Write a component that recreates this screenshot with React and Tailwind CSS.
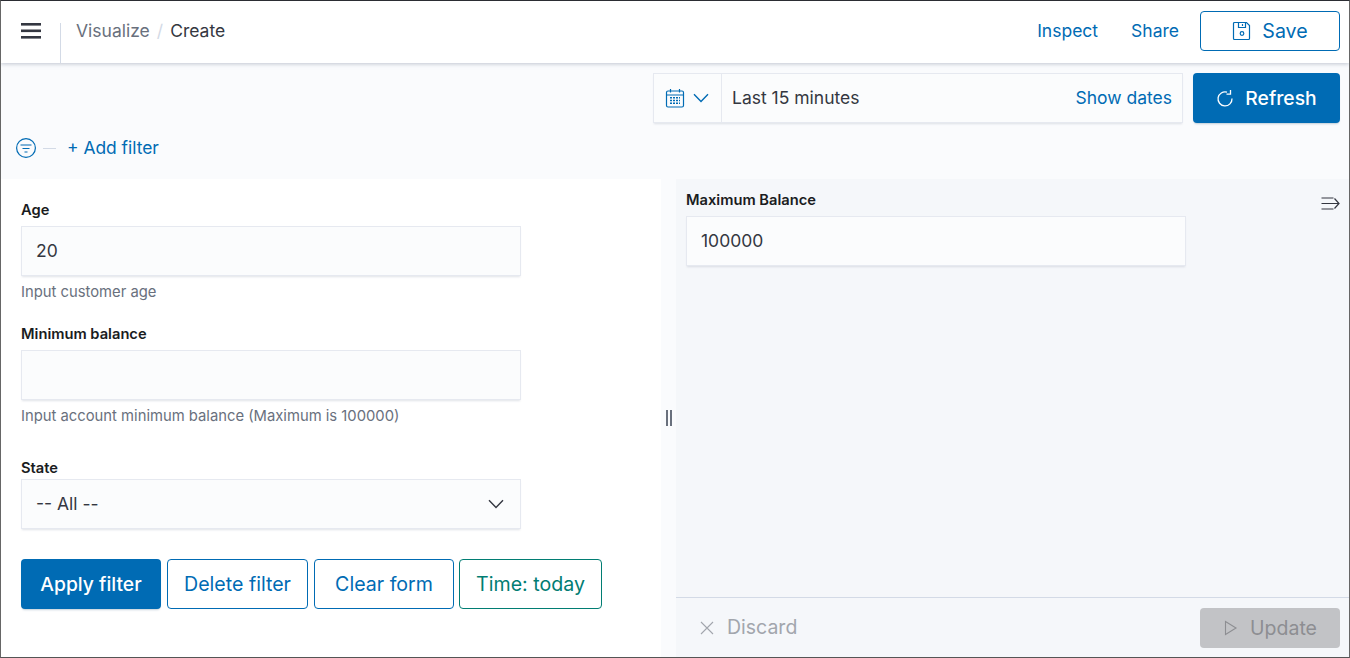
import React from "react";

const Field = ({ label, value, help, cls = "", gap = "mb-[7px]", children }) => (
  <div className={cls}>
    <div className={"text-[14.7px] leading-[18px] font-semibold text-[#1a1c21] " + gap}>{label}</div>
    <div className="w-[500px] h-[50px] bg-[#fbfcfd] border border-[#e6e9f0] shadow-[0_2px_2px_-1px_rgba(152,162,179,0.3)] flex items-center justify-between pl-[14px] pr-[16px] text-[17.5px] text-[#343741]">
      <span>{value}</span>
      {children}
    </div>
    {help && <div className="mt-[7px] text-[14.8px] leading-[18px] text-[#69707d]">{help}</div>}
  </div>
);

const Chevron = ({ cls }) => (
  <svg width="16" height="10" viewBox="0 0 16 10" fill="none" stroke="currentColor" strokeWidth="1.4" className={cls}>
    <path d="M1 1.2 8 8.4l7-7.2" />
  </svg>
);

export default function App() {
  return (
    <div className="w-[1350px] h-[658px] overflow-hidden flex flex-col bg-[#fafbfd] border-t border-l border-r border-b border-t-[#2b2d33] border-l-[#666] border-r-[#666] border-b-[#555] text-[#343741]" style={{ fontFamily: "Inter, 'Liberation Sans', sans-serif" }}>
      <header className="relative z-10 h-[62px] shrink-0 bg-white shadow-[0_1px_4px_rgba(152,162,179,0.6)] flex items-center pl-[20px] pr-[9px] pb-[2px]">
        <svg width="20" height="18" viewBox="0 0 20 18" className="text-[#343741] shrink-0" fill="currentColor">
          <rect x="0" y="1" width="20" height="2.6" />
          <rect x="0" y="7.5" width="20" height="2.6" />
          <rect x="0" y="14" width="20" height="2.6" />
        </svg>
        <div className="w-px h-[40px] bg-[#d3dae6] ml-[19px] self-end mb-[-2px]" />
        <div className="ml-[15px] flex items-center text-[17.5px]">
          <span className="text-[#69707d]">Visualize</span>
          <span className="mx-[7px] text-[#d3dae6]">/</span>
          <span className="text-[#343741]">Create</span>
        </div>
        <div className="ml-auto flex items-center text-[17.5px] text-[#006bb4]">
          <span>Inspect</span>
          <span className="ml-[33px]">Share</span>
          <button className="ml-[21px] w-[140px] h-[40px] rounded-[4px] border border-[#006bb4] flex items-center justify-center gap-[10px] text-[#006bb4] text-[19.6px]">
            <svg width="20" height="20" viewBox="0 0 20 20" fill="none" stroke="currentColor" strokeWidth="1.2">
              <path d="M2.5 1.5h12l3 3v13a1 1 0 0 1-1 1h-14a1 1 0 0 1-1-1v-15a1 1 0 0 1 1-1Z" />
              <path d="M6.5 1.5v5h7v-5M10.5 3v2" />
              <circle cx="10" cy="12.5" r="1.8" />
            </svg>
            <span className="pt-[1px]">Save</span>
          </button>
        </div>
      </header>

      <div className="h-[116px] shrink-0 relative">
        <div className="flex justify-end pt-[10px] pr-[9px]">
          <div className="w-[530px] h-[50px] bg-[#fbfcfd] border border-[#e6e9f0] shadow-[0_2px_2px_-1px_rgba(152,162,179,0.3)] flex items-center text-[17.5px]">
            <div className="w-[68px] h-full border-r border-[#e6e9f0] flex items-center pl-[11px] gap-[8px] text-[#006bb4] shrink-0">
              <svg width="20" height="20" viewBox="0 0 20 20" fill="none" stroke="currentColor" strokeWidth="1.2">
                <rect x="1.5" y="3" width="17" height="16" rx="1.5" />
                <path d="M1.5 7h17M5.5 1v3.5M14.5 1v3.5" />
                <path d="M5 9.8h10M5 12.5h10M5 15.2h10" strokeWidth="1.5" strokeDasharray="2 1" />
              </svg>
              <Chevron />
            </div>
            <span className="ml-[10px] text-[#343741]">Last 15 minutes</span>
            <span className="ml-auto mr-[10px] text-[#006bb4]">Show dates</span>
          </div>
          <button className="ml-[10px] w-[147px] h-[50px] rounded-[4px] bg-[#006bb4] text-white font-medium text-[19.3px] flex items-center justify-center gap-[11px] shadow-[0_2px_2px_-1px_rgba(54,97,126,0.3)]">
            <svg width="18" height="18" viewBox="0 0 18 18" fill="none" stroke="currentColor" strokeWidth="1.3">
              <path d="M11 3.2A7 7 0 1 0 16 9.5" />
              <path d="M14.5 1v4.2h-4" />
            </svg>
            Refresh
          </button>
        </div>
        <div className="absolute left-[15px] top-[72px] flex items-center text-[#006bb4] text-[17.4px]">
          <svg width="20" height="20" viewBox="0 0 20 20" fill="none" stroke="currentColor" strokeWidth="1.2">
            <circle cx="10" cy="10" r="9.4" />
            <path d="M4.5 7h11M6.5 10.5h7M8.5 14h3" />
          </svg>
          <span className="w-[13px] h-px bg-[#d3dae6] ml-[7px]" />
          <span className="ml-[11px]">+ Add filter</span>
        </div>
      </div>

      <div className="flex-1 flex min-h-0">
        <div className="w-[660px] bg-white pl-[20px] pt-[22px] shrink-0">
          <Field label="Age" value="20" help="Input customer age" />
          <Field cls="mt-[24px]" label="Minimum balance" value="" help="Input account minimum balance (Maximum is 100000)" />
          <Field cls="mt-[34px]" gap="mb-[2px]" label="State" value="-- All --">
            <Chevron cls="text-[#343741]" />
          </Field>
          <div className="mt-[30px] flex gap-[6px] text-[19.6px]">
            <button className="w-[140px] h-[50px] pt-[1px] rounded-[4px] bg-[#006bb4] text-white font-medium text-[19.3px] shadow-[0_2px_2px_-1px_rgba(54,97,126,0.3)]">Apply filter</button>
            <button className="w-[141px] h-[50px] pt-[1px] rounded-[4px] border border-[#006bb4] text-[#006bb4]">Delete filter</button>
            <button className="w-[140px] h-[50px] pt-[1px] rounded-[4px] border border-[#006bb4] text-[#006bb4]">Clear form</button>
            <button className="w-[143px] h-[50px] pt-[1px] rounded-[4px] border border-[#017d73] text-[#017d73] ml-[-1px]">Time: today</button>
          </div>
        </div>
        <div className="w-[15px] shrink-0 flex items-center justify-center">
          <div className="flex gap-[2px] h-[16px]">
            <span className="w-[2px] h-full bg-[#69707d]" />
            <span className="w-[2px] h-full bg-[#69707d]" />
          </div>
        </div>
        <div className="flex-1 bg-[#f5f7fa] flex flex-col min-w-0">
          <div className="flex-1 relative pl-[10px] pt-[12px]">
            <div className="text-[14.7px] leading-[18px] font-semibold text-[#1a1c21] mb-[7px]">Maximum Balance</div>
            <div className="w-[500px] h-[50px] bg-[#fbfcfd] border border-[#e6e9f0] shadow-[0_2px_2px_-1px_rgba(152,162,179,0.3)] flex items-center pl-[14px] text-[17.5px] text-[#343741]">100000</div>
            <svg width="19" height="15" viewBox="0 0 19 15" fill="none" stroke="#343741" strokeWidth="1.2" className="absolute right-[9px] top-[17px]">
              <path d="M0.5 2h12M0.5 7.5h17M0.5 13h12M13.5 2.5l4.5 5-4.5 5" />
            </svg>
          </div>
          <div className="h-[60px] shrink-0 border-t border-[#d3dae6] flex items-center justify-between pl-[23px] pr-[9px] text-[19.5px]">
            <div className="flex items-center gap-[12px] text-[#a2a6ad]">
              <svg width="16" height="16" viewBox="0 0 16 16" fill="none" stroke="currentColor" strokeWidth="1.1"><path d="M2 2l12 12M14 2 2 14" /></svg>
              <span className="pt-[1px]">Discard</span>
            </div>
            <button className="w-[140px] h-[40px] rounded-[4px] bg-[#c2c3c6] text-[#8d8e92] flex items-center justify-center gap-[11px] mt-[1px]">
              <svg width="16" height="18" viewBox="0 0 16 18" fill="none" stroke="currentColor" strokeWidth="1.1"><path d="M2.5 2.5v13l10.5-6.5Z" /></svg>
              <span className="pt-[1px]">Update</span>
            </button>
          </div>
        </div>
      </div>
    </div>
  );
}
